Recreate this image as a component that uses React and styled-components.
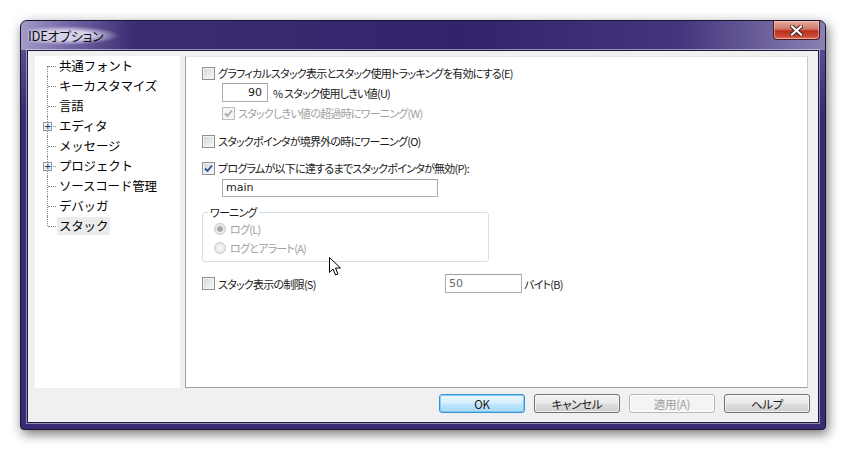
import React from 'react'
import { styled, createGlobalStyle } from 'styled-components'

const GlobalStyle = createGlobalStyle`
  html, body {
    margin: 0;
    padding: 0;
    background: #ffffff;
  }
  body {
    font-family: "Noto Sans CJK JP", "Liberation Sans", sans-serif;
  }
`

const treeItems = [
  { label: '共通フォント' },
  { label: 'キーカスタマイズ' },
  { label: '言語' },
  { label: 'エディタ', expandable: true },
  { label: 'メッセージ' },
  { label: 'プロジェクト', expandable: true },
  { label: 'ソースコード管理' },
  { label: 'デバッガ' },
  { label: 'スタック', selected: true },
]

function CheckBox({ checked, disabled }) {
  return (
    <Box $disabled={disabled}>
      {checked && (
        <svg width="9" height="9" viewBox="0 0 9 9">
          <path d="M1 4.5 L3.5 7 L8 1.5" fill="none" stroke={disabled ? '#a8a8a8' : '#2a4f9a'} strokeWidth="1.8" />
        </svg>
      )}
    </Box>
  )
}

function Radio({ checked }) {
  return <RadioDot $checked={checked} />
}

export default function App() {
  return (
    <>
      <GlobalStyle />
      <Page>
        <DialogFrame>
          <TitleBar>
            <Title>IDEオプション</Title>
            <CloseBtn>
              <svg width="13" height="11" viewBox="0 0 13 11">
                <path d="M2 1.5 L11 9.5 M11 1.5 L2 9.5" stroke="#3a1c1c" strokeWidth="4" strokeLinecap="square" />
                <path d="M2 1.5 L11 9.5 M11 1.5 L2 9.5" stroke="#ffffff" strokeWidth="2.2" strokeLinecap="square" />
              </svg>
            </CloseBtn>
          </TitleBar>
          <Client>
            <MainRow>
              <Tree>
                {treeItems.map((item, i) => (
                  <TreeRow key={item.label}>
                    <Connector $first={i === 0} $last={i === treeItems.length - 1}>
                      {item.expandable && <Plus>+</Plus>}
                    </Connector>
                    <TreeLabel $selected={item.selected}>{item.label}</TreeLabel>
                  </TreeRow>
                ))}
              </Tree>
              <Panel>
                <OptRow $top={9}>
                  <CheckBox />
                  <Label>グラフィカルスタック表示とスタック使用トラッキングを有効にする(E)</Label>
                </OptRow>
                <OptRow $top={3} $indent={20}>
                  <TextInput $w={46} $align="right">90</TextInput>
                  <Label>%&nbsp;スタック使用しきい値(U)</Label>
                </OptRow>
                <OptRow $top={4} $indent={20}>
                  <CheckBox checked disabled />
                  <Label $disabled>スタックしきい値の超過時にワーニング(W)</Label>
                </OptRow>
                <OptRow $top={14}>
                  <CheckBox />
                  <Label>スタックポインタが境界外の時にワーニング(O)</Label>
                </OptRow>
                <OptRow $top={13}>
                  <CheckBox checked />
                  <Label>プログラムが以下に達するまでスタックポインタが無効(P):</Label>
                </OptRow>
                <OptRow $top={4} $indent={20}>
                  <TextInput $w={216} $h={18}>main</TextInput>
                </OptRow>
                <Group>
                  <GroupLegend>ワーニング</GroupLegend>
                  <RadioRow>
                    <Radio checked />
                    <Label $disabled>ログ(L)</Label>
                  </RadioRow>
                  <RadioRow>
                    <Radio />
                    <Label $disabled>ログとアラート(A)</Label>
                  </RadioRow>
                  <Cursor>
                    <svg width="14" height="20" viewBox="0 0 14 20">
                      <path d="M0.5 0.5 L0.5 15.5 L4 12 L6.5 18 L9 17 L6.5 11 L11.5 11 Z" fill="#ffffff" stroke="#000000" strokeWidth="1" strokeLinejoin="round" />
                    </svg>
                  </Cursor>
                </Group>
                <LimitRow>
                  <LimitLeft>
                    <CheckBox />
                    <Label>スタック表示の制限(S)</Label>
                  </LimitLeft>
                  <TextInput $w={77} $muted>50</TextInput>
                  <Label>バイト(B)</Label>
                </LimitRow>
              </Panel>
            </MainRow>
            <ButtonRow>
              <Button $primary>OK</Button>
              <Button>キャンセル</Button>
              <Button $disabled>適用(A)</Button>
              <Button>ヘルプ</Button>
            </ButtonRow>
          </Client>
        </DialogFrame>
      </Page>
    </>
  )
}

const Page = styled.div`
  width: 846px;
  height: 449px;
  padding: 20px 0 0 20px;
  box-sizing: border-box;
`

const DialogFrame = styled.div`
  width: 806px;
  height: 410px;
  box-sizing: border-box;
  border: 1px solid #1c1430;
  border-radius: 7px 7px 4px 4px;
  padding: 0 6px 6px 6px;
  display: flex;
  flex-direction: column;
  background-color: #3b2b76;
  background-image: linear-gradient(180deg, #6a5c9c 0, #3b2b76 90px);
  box-shadow: 2px 4px 12px rgba(0, 0, 0, 0.55);
`

const TitleBar = styled.div`
  height: 29px;
  margin: 0 -6px;
  padding: 0 6px 0 7px;
  border-radius: 6px 6px 0 0;
  display: flex;
  align-items: flex-start;
  justify-content: space-between;
  background-color: #36266c;
  background-image: linear-gradient(90deg, #a49bc6 0%, #7a6dab 5%, #3c2c72 14%, #33236a 55%, #44357c 82%, #8a80b4 100%);
`

const Title = styled.div`
  margin-top: 5px;
  font-size: 13px;
  letter-spacing: -0.3px;
  color: #101010;
  font-feature-settings: "palt";
  padding: 0 16px 0 0;
  background: radial-gradient(ellipse at 40% 50%, rgba(220, 214, 238, 0.95) 35%, rgba(220, 214, 238, 0) 72%);
`

const CloseBtn = styled.div`
  width: 47px;
  height: 19px;
  margin-right: -1px;
  box-sizing: border-box;
  border: 1px solid #4a1a20;
  border-top: none;
  border-radius: 0 0 4px 4px;
  display: flex;
  align-items: center;
  justify-content: center;
  background: linear-gradient(180deg, #e6aa9c 0%, #d07868 45%, #b9301e 55%, #c84a36 85%, #e07a60 100%);
  box-shadow: inset 0 0 0 1px rgba(255, 220, 210, 0.5);
`

const Client = styled.div`
  flex: 1;
  background: #f0f0f0;
  border: 1px solid #20183a;
  outline: 1px solid rgba(255, 255, 255, 0.45);
  display: flex;
  flex-direction: column;
  padding: 5px 8px 8px 7px;
`

const MainRow = styled.div`
  display: flex;
  gap: 5px;
  height: 332px;
  margin-right: 2px;
`

const Tree = styled.div`
  width: 145px;
  background: #ffffff;
  display: flex;
  flex-direction: column;
`

const TreeRow = styled.div`
  display: flex;
  align-items: center;
  height: 20px;
`

const Connector = styled.div`
  position: relative;
  width: 22px;
  height: 20px;
  flex-shrink: 0;

  &::before {
    content: "";
    position: absolute;
    left: 12px;
    top: ${(p) => (p.$first ? '10px' : '0')};
    bottom: ${(p) => (p.$last ? '10px' : '0')};
    border-left: 1px dotted #8a8a8a;
  }

  &::after {
    content: "";
    position: absolute;
    left: 13px;
    width: 8px;
    top: 10px;
    border-top: 1px dotted #8a8a8a;
  }
`

const Plus = styled.span`
  position: absolute;
  z-index: 1;
  left: 8px;
  top: 6px;
  width: 9px;
  height: 9px;
  box-sizing: border-box;
  border: 1px solid #8d9aab;
  background: linear-gradient(180deg, #ffffff, #dfe4ea);
  font-family: "DejaVu Sans", sans-serif;
  font-size: 9px;
  font-weight: bold;
  line-height: 7px;
  text-align: center;
  color: #2d3f66;
`

const TreeLabel = styled.span`
  font-size: 12.5px;
  color: #000000;
  padding: 0 2px;
  line-height: 18px;
  letter-spacing: -0.2px;
  background: ${(p) => (p.$selected ? '#ececec' : 'transparent')};
`

const Panel = styled.div`
  position: relative;
  flex: 1;
  background: #ffffff;
  border: 1px solid #a0a0a0;
  border-top-color: #e6e6e6;
  border-right-color: #c8c8c8;
  padding-left: 16px;
  display: flex;
  flex-direction: column;
  align-items: flex-start;
`

const OptRow = styled.div`
  display: flex;
  align-items: center;
  gap: 3px;
  margin-top: ${(p) => p.$top || 0}px;
  margin-left: ${(p) => p.$indent || 0}px;
`

const Label = styled.span`
  font-size: 11px;
  font-feature-settings: "palt";
  letter-spacing: -0.75px;
  line-height: 14px;
  white-space: nowrap;
  color: ${(p) => (p.$disabled ? '#a0a0a0' : '#1a1a1a')};
`

const Box = styled.span`
  width: 13px;
  height: 13px;
  box-sizing: border-box;
  flex-shrink: 0;
  border: 1px solid ${(p) => (p.$disabled ? '#bcbcbc' : '#8e8f8f')};
  background: ${(p) =>
    p.$disabled
      ? '#f4f4f4'
      : 'linear-gradient(135deg, #d2d2d2 0%, #e8e8e8 50%, #f8f8f8 100%)'};
  box-shadow: inset 0 0 0 1px #f4f4f4;
  display: flex;
  align-items: center;
  justify-content: center;
`

const TextInput = styled.div`
  width: ${(p) => p.$w}px;
  height: ${(p) => p.$h || 19}px;
  box-sizing: border-box;
  border: 1px solid #abadb3;
  border-top-color: #9ea0a6;
  background: #ffffff;
  font-family: "DejaVu Sans", "Liberation Sans", sans-serif;
  font-size: 11px;
  line-height: ${(p) => (p.$h || 19) - 2}px;
  padding: 0 5px 0 3px;
  text-align: ${(p) => p.$align || 'left'};
  color: ${(p) => (p.$muted ? '#6d6d6d' : '#1a1a1a')};
  margin-right: 2px;
`

const Group = styled.div`
  position: relative;
  margin-top: 15px;
  width: 287px;
  height: 50px;
  box-sizing: border-box;
  border: 1px solid #d5dfe5;
  border-radius: 3px;
  padding: 9px 0 0 11px;
  display: flex;
  flex-direction: column;
  gap: 5px;
`

const GroupLegend = styled.span`
  position: absolute;
  top: -8px;
  left: 5px;
  padding: 0 2px;
  background: #ffffff;
  font-size: 11px;
  font-feature-settings: "palt";
  letter-spacing: -0.75px;
  line-height: 14px;
  color: #1a1a1a;
`

const RadioRow = styled.div`
  display: flex;
  align-items: center;
  gap: 4px;
`

const RadioDot = styled.span`
  width: 12px;
  height: 12px;
  box-sizing: border-box;
  border-radius: 50%;
  border: 1px solid #c6c6c6;
  background: ${(p) =>
    p.$checked
      ? 'radial-gradient(circle, #9a9a9a 0, #b4b4b4 2.5px, #e8e8e8 3.5px, #f2f2f2 100%)'
      : 'radial-gradient(circle, #f6f6f6 0, #e6e6e6 100%)'};
`

const Cursor = styled.div`
  position: absolute;
  left: 126px;
  top: 44px;
  line-height: 0;
`

const LimitRow = styled.div`
  display: flex;
  align-items: center;
  margin-top: 12px;
`

const LimitLeft = styled.div`
  display: flex;
  align-items: center;
  gap: 3px;
  width: 243px;
`

const ButtonRow = styled.div`
  display: flex;
  justify-content: flex-end;
  gap: 9px;
  margin-top: 6px;
`

const Button = styled.div`
  width: 86px;
  height: 19px;
  box-sizing: border-box;
  border-radius: 3px;
  border: 1px solid ${(p) => (p.$primary ? '#3c8fd0' : p.$disabled ? '#b8b8b8' : '#707070')};
  background: ${(p) =>
    p.$primary
      ? 'linear-gradient(180deg, #eaf6fd 0%, #d9f0fc 45%, #bee6fd 55%, #a7d9f5 100%)'
      : p.$disabled
      ? '#f4f4f4'
      : 'linear-gradient(180deg, #f2f2f2 0%, #ebebeb 45%, #dddddd 55%, #cfcfcf 100%)'};
  box-shadow: inset 0 0 0 1px ${(p) => (p.$primary ? 'rgba(110, 200, 245, 0.8)' : 'rgba(255, 255, 255, 0.7)')};
  display: flex;
  align-items: center;
  justify-content: center;
  font-size: 11.5px;
  font-feature-settings: "palt";
  letter-spacing: -0.3px;
  color: ${(p) => (p.$disabled ? '#a0a0a0' : '#1a1a1a')};
`
